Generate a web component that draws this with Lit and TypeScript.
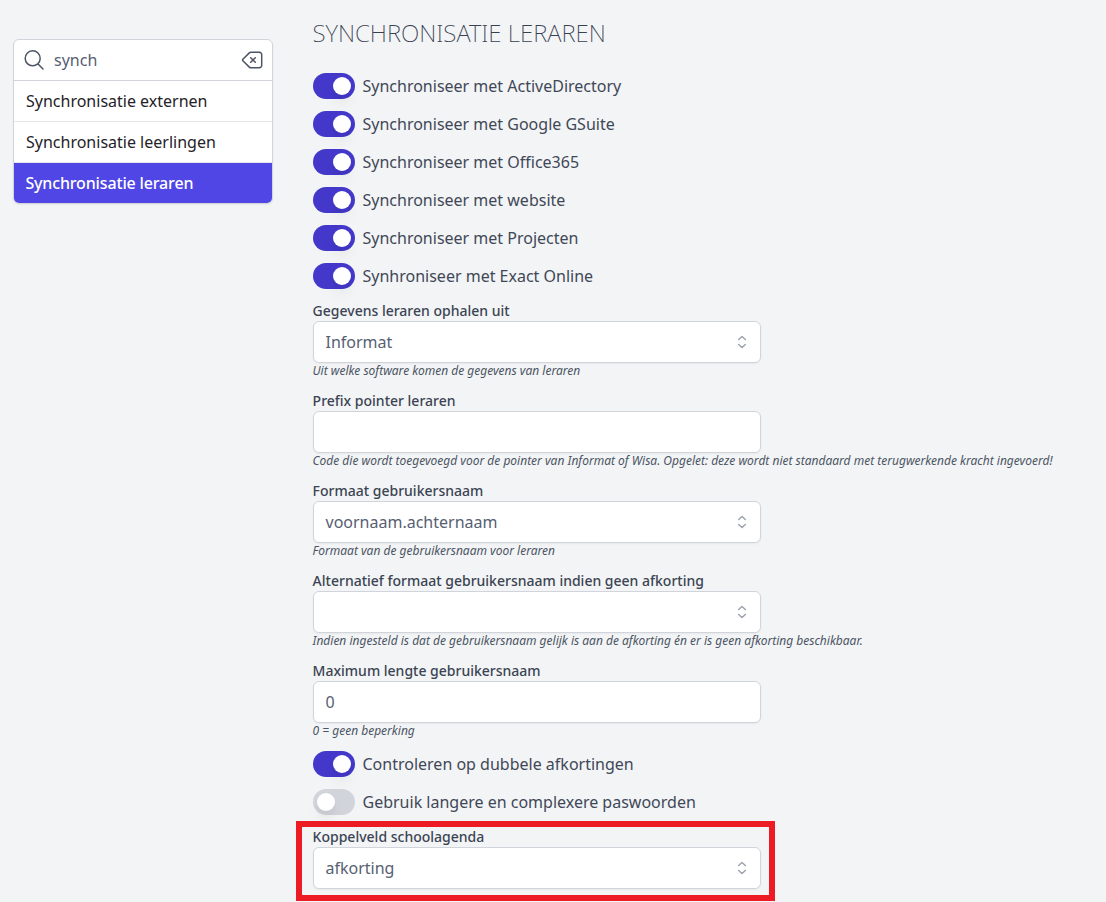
import { LitElement, html, css, svg, nothing } from "lit";
import { customElement, property } from "lit/decorators.js";

const FONT = css`"Noto Sans", "Open Sans", sans-serif`;

@customElement("toggle-row")
class ToggleRow extends LitElement {
  @property() label = "";
  @property({ type: Boolean }) on = false;

  static styles = css`
    :host { display: flex; align-items: center; height: 26px; }
    .track { box-sizing: border-box; width: 42px; height: 26px; padding: 4px; border-radius: 13px; background: #d1d5db; display: flex; flex: none; }
    .track.on { background: #4338ca; justify-content: flex-end; }
    .knob { width: 18px; height: 18px; border-radius: 50%; background: #fff; box-shadow: 0 10px 15px -3px rgba(0, 0, 0, 0.1), 0 4px 6px -2px rgba(0, 0, 0, 0.05); }
    .label { margin-left: 7.5px; font: 400 16px/24px ${FONT}; color: #3f4857; white-space: nowrap; }
  `;

  render() {
    return html`<span class="track ${this.on ? "on" : ""}"><span class="knob"></span></span><span class="label">${this.label}</span>`;
  }
}

@customElement("form-field")
class FormField extends LitElement {
  @property() label = "";
  @property() value = "";
  @property() help = "";
  @property({ type: Boolean }) select = false;

  static styles = css`
    :host { display: block; font-family: ${FONT}; }
    .label { margin-left: -0.4px; font-size: 14px; line-height: 20px; font-weight: 500; color: #3b4453; white-space: nowrap; }
    .box { box-sizing: border-box; width: 448px; height: 42px; padding: 0 9px 0 11.5px; display: flex; align-items: center; justify-content: space-between; border: 1px solid #d1d5db; border-radius: 6px; background: #fff; box-shadow: 0 1px 2px rgba(0, 0, 0, 0.05); font-size: 16px; line-height: 24px; color: #566072; }
    .help { margin-left: -0.5px; font-size: 12px; line-height: 16px; font-style: italic; color: #4b5563; white-space: nowrap; }
    svg { width: 18px; height: 18px; display: block; }
  `;

  render() {
    return html`
      <div class="label">${this.label}</div>
      <div class="box">
        <span>${this.value}</span>
        ${this.select
          ? html`<svg viewBox="0 0 20 20" fill="none" stroke="#9ca3af" stroke-width="1.7" stroke-linecap="round" stroke-linejoin="round">${svg`<path d="M6.3 7.2 10 3.9l3.7 3.3M6.3 12.8l3.7 3.3 3.7-3.3"/>`}</svg>`
          : nothing}
      </div>
      ${this.help ? html`<div class="help">${this.help}</div>` : nothing}
    `;
  }
}

@customElement("app-root")
class AppRoot extends LitElement {
  static styles = css`
    :host { display: block; box-sizing: border-box; height: 902px; overflow: hidden; background: #f3f4f6; font-family: ${FONT}; }
    .page { display: flex; align-items: flex-start; padding-left: 13px; }
    .menu { box-sizing: border-box; width: 260px; margin-top: 39px; flex: none; border: 1px solid #d1d5db; border-radius: 6px; background: #fff; overflow: hidden; font-size: 16px; line-height: 24px; box-shadow: 0 1px 2px rgba(0, 0, 0, 0.05); }
    .search, .item { box-sizing: border-box; height: 41px; display: flex; align-items: center; border-bottom: 1px solid #e5e7eb; }
    .search { padding: 0 8px; border-color: #d1d5db; color: #566072; }
    .term { flex: 1; margin-left: 8px; }
    .search svg { width: 24px; height: 24px; display: block; }
    .item { padding: 0 12px; color: #1f2228; }
    .item.active { height: 40px; border: 0; padding-left: 11.4px; background: #4f46e5; color: #fff; font-weight: 500; letter-spacing: -0.15px; }
    .content { margin-left: 40px; padding-top: 17px; display: flex; flex-direction: column; gap: 12px; min-width: 0; }
    h1 { margin: 0 0 12px -0.5px; font-size: 24px; line-height: 32px; font-weight: 200; color: #374151; text-transform: uppercase; white-space: nowrap; }
    .highlight { box-sizing: border-box; width: 479px; height: 80px; margin: -6px 0 0 -17px; padding-left: 11px; border: 6px solid #ed1c24; }
  `;

  private toggles = [
    "Synchroniseer met ActiveDirectory",
    "Synchroniseer met Google GSuite",
    "Synchroniseer met Office365",
    "Synchroniseer met website",
    "Synchroniseer met Projecten",
    "Synhroniseer met Exact Online",
  ];

  private fields = [
    { label: "Gegevens leraren ophalen uit", value: "Informat", select: true, help: "Uit welke software komen de gegevens van leraren" },
    { label: "Prefix pointer leraren", value: "", select: false, help: "Code die wordt toegevoegd voor de pointer van Informat of Wisa. Opgelet: deze wordt niet standaard met terugwerkende kracht ingevoerd!" },
    { label: "Formaat gebruikersnaam", value: "voornaam.achternaam", select: true, help: "Formaat van de gebruikersnaam voor leraren" },
    { label: "Alternatief formaat gebruikersnaam indien geen afkorting", value: "", select: true, help: "Indien ingesteld is dat de gebruikersnaam gelijk is aan de afkorting én er is geen afkorting beschikbaar." },
    { label: "Maximum lengte gebruikersnaam", value: "0", select: false, help: "0 = geen beperking" },
  ];

  render() {
    return html`
      <div class="page">
        <nav class="menu">
          <div class="search">
            <svg viewBox="0 0 24 24" fill="none" stroke="#4b5563" stroke-width="1.5" stroke-linecap="round" stroke-linejoin="round"><path d="m21 21-5.2-5.2m0 0A7.5 7.5 0 1 0 5.2 5.2a7.5 7.5 0 0 0 10.6 10.6z"/></svg>
            <span class="term">synch</span>
            <svg viewBox="0 0 24 24" fill="none" stroke="#4b5563" stroke-width="1.5" stroke-linecap="round" stroke-linejoin="round"><path d="m10.7 9.7 4.6 4.6m0-4.6-4.6 4.6M2.9 12.8 9.3 19.1c.4.4 1 .7 1.6.7h8.6a2.25 2.25 0 0 0 2.2-2.3V6.5a2.25 2.25 0 0 0-2.2-2.3h-8.6c-.6 0-1.2.3-1.6.7L2.9 11.2a1.1 1.1 0 0 0 0 1.6z"/></svg>
          </div>
          <div class="item">Synchronisatie externen</div>
          <div class="item">Synchronisatie leerlingen</div>
          <div class="item active">Synchronisatie leraren</div>
        </nav>
        <main class="content">
          <h1>Synchronisatie leraren</h1>
          ${this.toggles.map((t) => html`<toggle-row .label=${t} .on=${true}></toggle-row>`)}
          ${this.fields.map((f) => html`<form-field .label=${f.label} .value=${f.value} .help=${f.help} .select=${f.select}></form-field>`)}
          <toggle-row .label=${"Controleren op dubbele afkortingen"} .on=${true}></toggle-row>
          <toggle-row .label=${"Gebruik langere en complexere paswoorden"}></toggle-row>
          <div class="highlight">
            <form-field .label=${"Koppelveld schoolagenda"} .value=${"afkorting"} .select=${true}></form-field>
          </div>
        </main>
      </div>
    `;
  }
}
